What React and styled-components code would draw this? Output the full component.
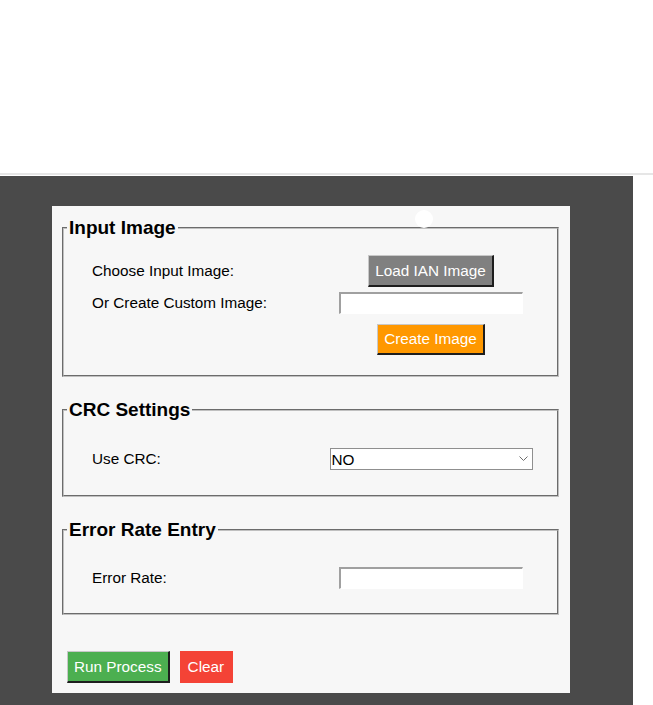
import React from 'react'
import styled, { createGlobalStyle } from 'styled-components'

const GlobalStyle = createGlobalStyle`
  body {
    margin: 0;
    background: #fff;
    font-family: "Liberation Sans", Arial, sans-serif;
  }
`

const TopSpace = styled.div`
  height: 173px;
`

const Divider = styled.div`
  height: 2px;
  background: #e6e6e6;
  margin-bottom: 1px;
`

const Stage = styled.section`
  box-sizing: border-box;
  width: 633px;
  min-height: 529px;
  background: #4a4a4a;
  padding: 30px 0 12px 52px;
`

const Panel = styled.div`
  position: relative;
  box-sizing: border-box;
  width: 518px;
  background: #f7f7f7;
  padding: 11px 11px 10px 10px;
  display: flex;
  flex-direction: column;
`

const Knob = styled.span`
  position: absolute;
  left: 363px;
  top: 4px;
  width: 18px;
  height: 18px;
  border-radius: 50%;
  background: #fff;
`

const Fieldset = styled.fieldset`
  margin: 0 0 ${p => p.$after}px;
  padding: 0;
  border: 2px groove rgb(192, 192, 192);
  min-width: 0;
`

const Legend = styled.legend`
  padding: 0 2px;
  margin-left: 3px;
  font-size: 19px;
  font-weight: bold;
  color: #000;
`

const Body = styled.div`
  display: flex;
  flex-direction: column;
  padding: ${p => p.$top}px 16px ${p => p.$bottom}px 28px;
`

const Row = styled.div`
  display: grid;
  grid-template-columns: 1fr 220px;
  align-items: center;
  justify-items: start;
  margin-top: ${p => p.$gapBefore || 0}px;

  > :nth-child(2) {
    justify-self: center;
  }
`

const Label = styled.label`
  font-size: 15.3px;
  color: #000;
`

const Button = styled.button`
  box-sizing: border-box;
  height: ${p => p.$h || 32}px;
  font-family: inherit;
  font-size: 15.3px;
  color: #fff;
  background: ${p => p.$bg};
  border-style: solid;
  border-width: 1px 2px 2px 1px;
  border-color: ${p => p.$flat ? p.$bg : '#c8c8c8 #1e1e1e #1e1e1e #c8c8c8'};
  padding: ${p => p.$flat ? '0 7px' : '0 6px'};
  cursor: pointer;
`

const TextInput = styled.input`
  box-sizing: border-box;
  width: 184px;
  height: 22px;
  padding: 0 3px;
  background: #fff;
  border-style: solid;
  border-width: 2px 1px 1px 2px;
  border-color: #a0a0a0 #fff #fff #a0a0a0;
  font-family: inherit;
  font-size: 15.3px;
  outline: none;
`

const SelectWrap = styled.div`
  position: relative;
  width: 203px;
  height: 22px;

  svg {
    position: absolute;
    right: 5px;
    top: 8px;
    pointer-events: none;
  }
`

const Select = styled.select`
  appearance: none;
  box-sizing: border-box;
  width: 100%;
  height: 100%;
  padding: 0 0 0 1px;
  background: #fff;
  border: 1px solid #8f8f8f;
  border-radius: 0;
  font-family: inherit;
  font-size: 15.3px;
  color: #000;
  outline: none;
`

const Actions = styled.div`
  display: flex;
  gap: 10px;
  padding-left: 5px;
`

export default function App() {
  return (
    <>
      <GlobalStyle />
      <TopSpace />
      <Divider />
      <Stage>
        <Panel>
          <Knob />
          <Fieldset $after={22}>
            <Legend>Input Image</Legend>
            <Body $top={16} $bottom={20}>
              <Row>
                <Label>Choose Input Image:</Label>
                <Button $bg="#808080">Load IAN Image</Button>
              </Row>
              <Row $gapBefore={5}>
                <Label>Or Create Custom Image:</Label>
                <TextInput type="text" />
              </Row>
              <Row $gapBefore={10}>
                <span />
                <Button $bg="#ff9800" $h={31}>Create Image</Button>
              </Row>
            </Body>
          </Fieldset>

          <Fieldset $after={22}>
            <Legend>CRC Settings</Legend>
            <Body $top={27} $bottom={25}>
              <Row>
                <Label>Use CRC:</Label>
                <SelectWrap>
                  <Select defaultValue="NO">
                    <option value="NO">NO</option>
                    <option value="YES">YES</option>
                  </Select>
                  <svg width="9" height="6" viewBox="0 0 9 6">
                    <path d="M0.5 0.5 L4.5 4.5 L8.5 0.5" fill="none" stroke="#6e6e6e" strokeWidth="1" />
                  </svg>
                </SelectWrap>
              </Row>
            </Body>
          </Fieldset>

          <Fieldset $after={36}>
            <Legend>Error Rate Entry</Legend>
            <Body $top={26} $bottom={24}>
              <Row>
                <Label>Error Rate:</Label>
                <TextInput type="text" />
              </Row>
            </Body>
          </Fieldset>

          <Actions>
            <Button $bg="#4caf50">Run Process</Button>
            <Button $bg="#f44336" $flat>Clear</Button>
          </Actions>
        </Panel>
      </Stage>
    </>
  )
}
